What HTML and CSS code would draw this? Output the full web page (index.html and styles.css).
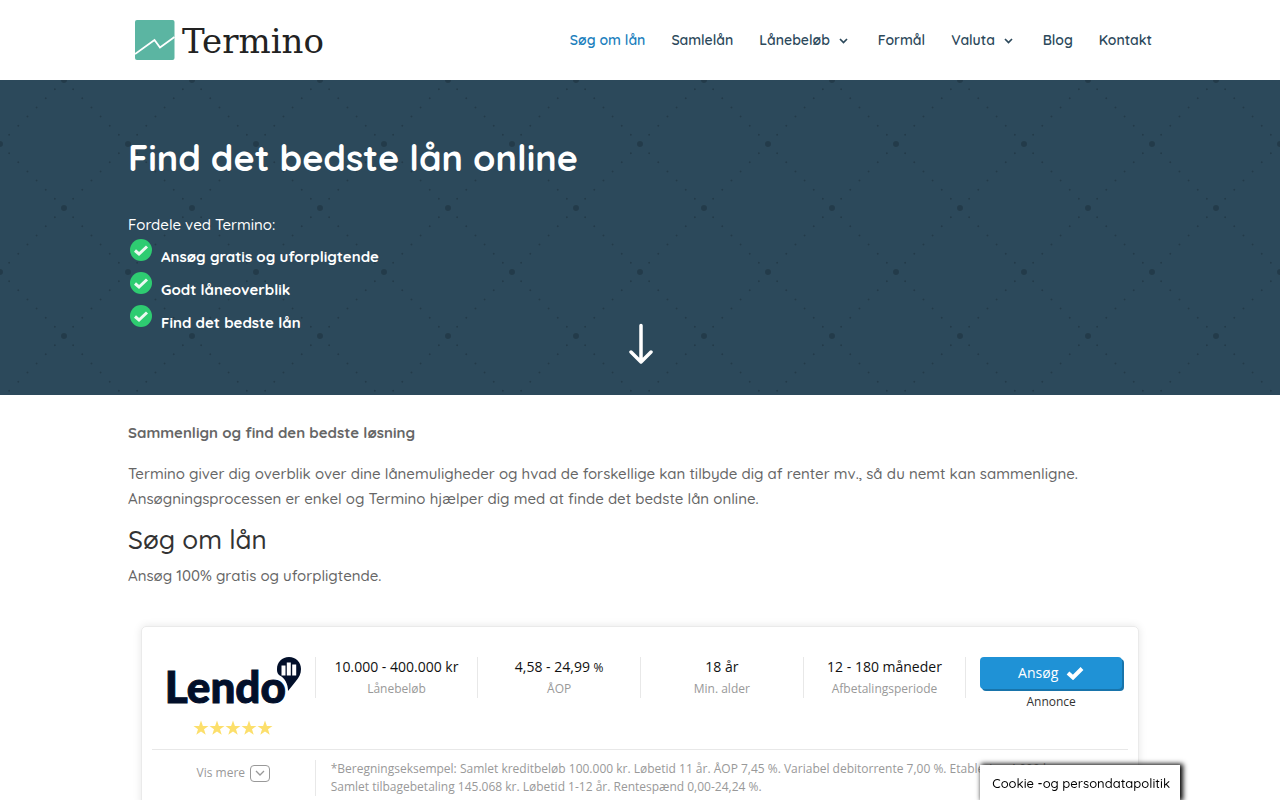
FILE: index.html
```html
<!DOCTYPE html>
<html lang="da">
<head>
<meta charset="utf-8">
<meta name="viewport" content="width=device-width, initial-scale=1">
<title>Termino – Find det bedste lån online</title>
<link rel="stylesheet" href="styles.css">
</head>
<body>
<header class="site-header">
  <div class="container header-row">
    <a class="brand" href="#">
      <svg class="brand-mark" viewBox="0 0 40 40" aria-hidden="true">
        <rect width="39.500" height="40" rx="2" fill="#5bb5a2"/>
        <path d="M0 34 L19.500 20 L25 27.500 L39.500 17" fill="none" stroke="#fff" stroke-width="1.800"/>
      </svg>
      <span class="brand-name">Termino</span>
    </a>
    <nav class="main-nav">
      <a class="active" href="#">Søg om lån</a>
      <a href="#">Samlelån</a>
      <a href="#">Lånebeløb <svg class="caret" viewBox="0 0 9 6" aria-hidden="true"><path d="M1 1 L4.500 4.500 L8 1"/></svg></a>
      <a href="#">Formål</a>
      <a href="#">Valuta <svg class="caret" viewBox="0 0 9 6" aria-hidden="true"><path d="M1 1 L4.500 4.500 L8 1"/></svg></a>
      <a href="#">Blog</a>
      <a href="#">Kontakt</a>
    </nav>
  </div>
</header>

<section class="hero">
  <div class="container">
    <h1>Find det bedste lån online</h1>
    <p class="hero-intro">Fordele ved Termino:</p>
    <ul class="benefits">
      <li><svg class="tick" viewBox="0 0 22 22" aria-hidden="true"><circle cx="11" cy="11" r="11" fill="#2ecc71"/><path d="M5 11.500 L9 15 L17 7.500" fill="none" stroke="#ecf9f1" stroke-width="3"/></svg><strong>Ansøg gratis og uforpligtende</strong></li>
      <li><svg class="tick" viewBox="0 0 22 22" aria-hidden="true"><circle cx="11" cy="11" r="11" fill="#2ecc71"/><path d="M5 11.500 L9 15 L17 7.500" fill="none" stroke="#ecf9f1" stroke-width="3"/></svg><strong>Godt låneoverblik</strong></li>
      <li><svg class="tick" viewBox="0 0 22 22" aria-hidden="true"><circle cx="11" cy="11" r="11" fill="#2ecc71"/><path d="M5 11.500 L9 15 L17 7.500" fill="none" stroke="#ecf9f1" stroke-width="3"/></svg><strong>Find det bedste lån</strong></li>
    </ul>
  </div>
  <a class="scroll-down" href="#soeg" aria-label="Rul ned">
    <svg viewBox="0 0 24 42" aria-hidden="true"><path d="M12 2.500 V38 M2 29 L12 39 L22 29"/></svg>
  </a>
</section>

<main class="container content">
  <p class="lead"><strong>Sammenlign og find den bedste løsning</strong></p>
  <p>Termino giver dig overblik over dine lånemuligheder og hvad de forskellige kan tilbyde dig af renter mv., så du nemt kan sammenligne. Ansøgningsprocessen er enkel og Termino hjælper dig med at finde det bedste lån online.</p>
  <h2 id="soeg">Søg om lån</h2>
  <p>Ansøg 100% gratis og uforpligtende.</p>

  <article class="loan-card">
    <div class="loan-main">
      <div class="lender">
        <a class="lender-logo" href="#">
          <span>Lendo</span>
          <svg viewBox="0 0 26 36" aria-hidden="true">
            <path d="M13 0 C20 0 25 5 25 12 C25 17 23 20 20 24 L12 34 C12 27 9 21 3 18 C1 16 1 14 1 12 C1 5 6 0 13 0 Z" fill="#020f2a"/>
            <path d="M5.500 8.500 H9.500 V18.500 H5.500 Z M10.800 5.500 H14.800 V18.500 H10.800 Z M16.200 7.500 H20.200 V18.500 H16.200 Z" fill="#fff"/>
          </svg>
        </a>
        <svg class="stars" viewBox="0 0 80 16" role="img" aria-label="5 stjerner">
          <defs><path id="star" d="M8 0.500 L9.900 5.900 L15.500 5.900 L11 9.300 L12.700 14.700 L8 11.400 L3.300 14.700 L5 9.300 L0.500 5.900 L6.100 5.900 Z"/></defs>
          <use href="#star"/><use href="#star" x="16"/><use href="#star" x="32"/><use href="#star" x="48"/><use href="#star" x="64"/>
        </svg>
      </div>
      <div class="fact"><span class="value">10.000 - 400.000 kr</span><span class="label">Lånebeløb</span></div>
      <div class="fact"><span class="value">4,58 - 24,99 <small>%</small></span><span class="label">ÅOP</span></div>
      <div class="fact"><span class="value">18 år</span><span class="label">Min. alder</span></div>
      <div class="fact"><span class="value">12 - 180 måneder</span><span class="label">Afbetalingsperiode</span></div>
      <div class="action">
        <a class="apply" href="#">Ansøg <svg viewBox="0 0 18 14" aria-hidden="true"><path d="M2 7 L7 11.500 L16 2.500"/></svg></a>
        <span class="ad-note">Annonce</span>
      </div>
    </div>
    <div class="loan-more">
      <button class="more" type="button">Vis mere <span class="more-box"><svg viewBox="0 0 10 6" aria-hidden="true"><path d="M1 1 L5 5 L9 1"/></svg></span></button>
      <p class="example">*Beregningseksempel: Samlet kreditbeløb 100.000 kr. Løbetid 11 år. ÅOP 7,45 %. Variabel debitorrente 7,00 %. Etablering 4.000 kr. Samlet tilbagebetaling 145.068 kr. Løbetid 1-12 år. Rentespænd 0,00-24,24 %.</p>
    </div>
  </article>
</main>
<button class="cookie" type="button">Cookie -og persondatapolitik</button>
</body>
</html>
```
FILE: styles.css
```css
* { box-sizing: border-box; }
body {
  margin: 0;
  background: #fff;
  color: #666;
  font: 500 15px/25px Quicksand, Lato, sans-serif;
}
a { color: inherit; text-decoration: none; }
p, h1, h2, ul { margin: 0; }
.container { width: 80%; max-width: 1080px; margin: 0 auto; }

.header-row { display: flex; align-items: center; justify-content: space-between; height: 80px; }
.brand { display: flex; align-items: center; gap: 7px; padding-left: 7px; }
.brand-mark { width: 40px; height: 40px; }
.brand-name { padding-top: 2px; font: 34px/40px "DejaVu Serif", serif; color: #222; }
.main-nav { display: flex; gap: 26px; font-size: 14px; font-weight: 600; color: #2c495b; white-space: nowrap; }
.main-nav .active { color: #1b80bd; }
.caret { width: 9px; height: 6px; margin: 0 4px 1px 5px; }
.caret path { fill: none; stroke: currentColor; stroke-width: 1.7; }

.hero {
  position: relative;
  padding: 54px 0 59px;
  color: #fff;
  background-color: #2c495b;
  background-size: 128px 128px;
  background-image: url("data:image/svg+xml,%3Csvg xmlns='http://www.w3.org/2000/svg' viewBox='0 0 128 128'%3E%3Cg fill='none' stroke='%23233b4a' stroke-linecap='round'%3E%3Cpath d='M64 0 L128 64 L64 128 L0 64 Z' stroke-width='2' stroke-dasharray='0 12.93'/%3E%3Cpath d='M64 0h0M64 128h0M0 64h0M128 64h0' stroke-width='6'/%3E%3C/g%3E%3C/svg%3E");
}
.hero h1 { font-size: 36px; line-height: 48px; font-weight: 700; }
.hero-intro { margin-top: 30px; }
.benefits { padding: 0; list-style: none; }
.benefits li { display: flex; align-items: flex-start; gap: 9px; height: 33px; padding: 2px 0 0 2px; }
.benefits strong { padding-top: 5px; }
.tick { width: 22px; height: 22px; }
.scroll-down { position: absolute; left: 50%; bottom: 30px; width: 24px; height: 42px; margin-left: -11px; }
.scroll-down path { fill: none; stroke: #fff; stroke-width: 3.5; stroke-linecap: round; stroke-linejoin: round; }

.content { padding-top: 25px; }
.lead { margin-bottom: 16px; }
.content h2 { margin: 13px 0 7px; color: #333; font-size: 26px; line-height: 32px; font-weight: 500; }

.loan-card {
  margin: 38px 13px 40px;
  padding: 30px 10px 10px;
  border: 1px solid #eaeaea;
  border-radius: 5px;
  box-shadow: 0 0 8px rgba(0, 0, 0, .1);
  font: 12px/18px "Open Sans", sans-serif;
  color: #999;
}
.loan-main { display: grid; grid-template-columns: repeat(6, 1fr); align-items: start; padding-bottom: 13px; border-bottom: 1px solid #e8e8e8; }
.lender { display: flex; flex-direction: column; align-items: center; gap: 13px; }
.lender-logo { display: flex; align-items: flex-start; color: #020f2a; font: 900 44px/42px Lato, sans-serif; -webkit-text-stroke: 1px #020f2a; }
.lender-logo span { padding-top: 8px; }
.lender-logo svg { width: 26px; height: 36px; margin-left: -10px; }
.stars { width: 80px; height: 16px; fill: #fcdf6b; }
.fact { display: flex; flex-direction: column; align-items: center; height: 41px; border-left: 1px solid #e8e8e8; white-space: nowrap; }
.value { color: #111; font-size: 14px; line-height: 20px; }
.value small { font-size: 12px; line-height: 12px; }
.label { margin-top: 3px; }
.action { display: flex; flex-direction: column; padding: 0 6px 0 14px; border-left: 1px solid #e8e8e8; height: 41px; text-align: center; }
.apply { display: flex; align-items: center; justify-content: center; gap: 8px; height: 32px; flex: none; border-radius: 4px; background: #1f92d6; box-shadow: 2px 2px 0 #1874ab; color: #fff; font-size: 14px; }
.apply svg { width: 18px; height: 14px; }
.apply path { fill: none; stroke: #fff; stroke-width: 4; }
.ad-note { margin-top: 4px; color: #333; }
.loan-more { display: grid; grid-template-columns: 1fr 5fr; align-items: start; padding-top: 10px; }
.more { display: flex; align-items: center; justify-content: center; gap: 5px; margin-top: 4px; padding: 0; border: 0; background: none; color: inherit; font: inherit; }
.more-box { display: grid; place-items: center; width: 20px; height: 17px; border: 1px solid #999; border-radius: 4px; }
.more-box svg { width: 10px; height: 6px; }
.more-box path { fill: none; stroke: #999; stroke-width: 1.3; }
.example { padding: 0 60px 0 15px; border-left: 1px solid #e8e8e8; }
.cookie { position: fixed; right: 100px; bottom: 0; height: 35px; padding: 0 10px 0 12px; border: 0; background: #fff; box-shadow: 2px 0 5px 1px #000; color: #000; font: 500 13px/20px Quicksand, Lato, sans-serif; }
```
